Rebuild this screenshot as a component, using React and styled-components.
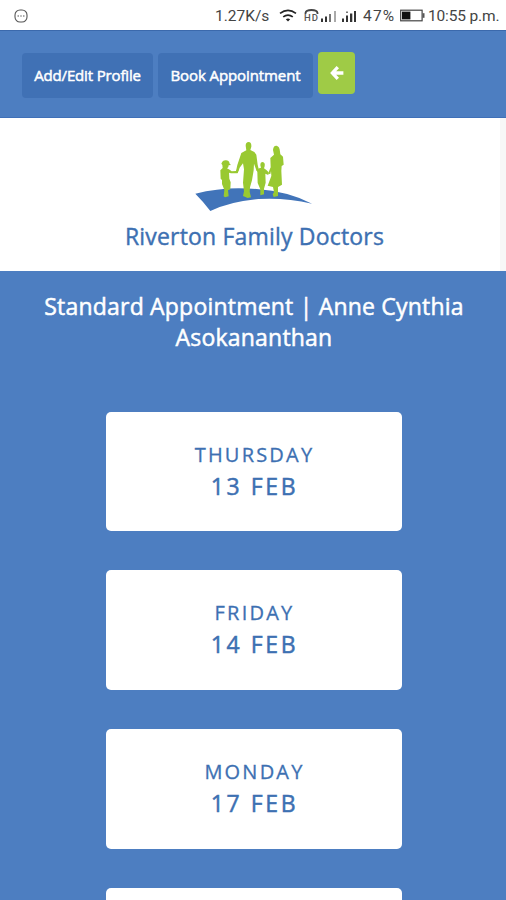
import React from 'react';
import styled, { createGlobalStyle } from 'styled-components';

const GlobalStyle = createGlobalStyle`
    * {
        box-sizing: border-box;
    }

    body {
        margin: 0;
        background-color: #4D7EC1;
        font-family: 'Open Sans', 'Noto Sans', sans-serif;
    }
`;

const Screen = styled.div`
    width: 100%;
    height: 900px;
    overflow: hidden;
    background-color: #4D7EC1;
`;

const StatusBar = styled.div`
    height: 30px;
    padding: 1px 7px 0 14px;
    display: flex;
    align-items: center;
    background-color: #fff;
    color: #444;
    font-family: Roboto, sans-serif;
    font-size: 15.5px;
    white-space: nowrap;
`;

const StatusText = styled.span`
    width: ${({ $width }) => $width}px;
    margin-left: ${({ $left }) => $left || 0}px;
    letter-spacing: ${({ $spacing }) => $spacing || 0}px;
`;

const StatusIcon = styled.svg`
    display: block;
    flex: none;
    margin-left: ${({ $left }) => $left || 0}px;
`;

const NavBar = styled.nav`
    height: 88px;
    padding: 22px 22px 0;
    display: flex;
    align-items: flex-start;
    gap: 5px;
    border-top: 1px solid #3B69AC;
    border-bottom: 1px solid #3F70B8;
`;

const NavButton = styled.button`
    width: ${({ $width }) => $width}px;
    height: 45px;
    padding: 0 0 2px;
    border: 0;
    border-radius: 4px;
    background-color: #4071B5;
    color: #fff;
    font-family: inherit;
    font-size: 15px;
    letter-spacing: ${({ $spacing }) => $spacing}px;
    white-space: nowrap;
    -webkit-text-stroke: 0.5px #fff;
`;

const BackButton = styled.button`
    width: 37px;
    height: 42px;
    margin-top: -1px;
    padding: 0;
    display: flex;
    align-items: center;
    justify-content: center;
    border: 0;
    border-radius: 4px;
    background-color: #9FCB46;
`;

const Brand = styled.header`
    height: 153px;
    padding: 12px 0 0 9px;
    display: flex;
    flex-direction: column;
    align-items: center;
    border-right: 6px solid #F7F7F7;
    background-color: #fff;
`;

const BrandName = styled.h1`
    margin: 0;
    color: #3D70B2;
    font-size: 23px;
    font-weight: 400;
    line-height: 32px;
    letter-spacing: 0.18px;
    white-space: nowrap;
    -webkit-text-stroke: 0.4px #3D70B2;
`;

const Title = styled.h2`
    margin: 0;
    padding: 20px 29px 0 31px;
    color: #fff;
    font-size: 23px;
    font-weight: 400;
    line-height: 31px;
    letter-spacing: 0.2px;
    text-align: center;
    -webkit-text-stroke: 0.5px #fff;
`;

const DayList = styled.div`
    padding: 58.6px 104px 0 106px;
    display: flex;
    flex-direction: column;
    gap: 39px;
`;

const DayCard = styled.div`
    height: 119.7px;
    flex: none;
    padding: 27px 0 0 1px;
    border-radius: 5px;
    background-color: #fff;
    color: #3D70B2;
    text-align: center;
    -webkit-text-stroke: 0.3px #3D70B2;
`;

const DayName = styled.div`
    font-size: 20px;
    line-height: 31px;
    letter-spacing: 2.2px;
`;

const DayDate = styled.div`
    font-size: 23px;
    line-height: 32px;
    letter-spacing: 2.6px;
    -webkit-text-stroke: 0.5px #3D70B2;
`;

const days = [
  { name: 'THURSDAY', date: '13 FEB' },
  { name: 'FRIDAY', date: '14 FEB' },
  { name: 'MONDAY', date: '17 FEB' },
  { name: '', date: '' },
];

function MessageIcon() {
  return (
    <StatusIcon width="14" height="14" viewBox="0 0 14 14" fill="none" stroke="#555" strokeWidth="1.1">
      <rect x="1" y="1" width="12" height="12" rx="5" />
      <path d="M3.5 7H5M6.3 7H7.7M9 7H10.5" />
    </StatusIcon>
  );
}

function WifiIcon() {
  return (
    <StatusIcon width="18" height="14" viewBox="0 0 18 14" fill="none" stroke="#222" strokeWidth="1.7">
      <path d="M1 4.4Q9 -1.5 17 4.4M4.2 7.9Q9 4.2 13.8 7.9" />
      <path d="M6.8 10.2Q9 8.7 11.2 10.2L9 12.6Z" fill="#222" stroke="none" />
    </StatusIcon>
  );
}

function SignalIcons() {
  return (
    <StatusIcon $left={7} width="56" height="16" viewBox="0 0 56 16">
      <path d="M1.5 6V5Q2 2 7.5 2T13.5 5V6" fill="none" stroke="#444" strokeWidth="1.8" />
      <text x="0" y="13.4" fontFamily="Roboto, sans-serif" fontSize="9.5" fontWeight="500" fill="#555" textLength="14">HD</text>
      <path d="M17 10.5H19V14H17ZM21 8.5H23V14H21Z" fill="#333" />
      <path d="M25 6H27V14H25Z" fill="#777" />
      <path d="M30 3H32V14H30Z" fill="#aaa" />
      <path d="M38 10.5H40V14H38ZM42 7.5H44V14H42ZM46 5.5H48.3V14H46ZM50 3H52V14H50Z" fill="#333" />
      <path d="M42 3.5H44V5H42Z" fill="#777" />
    </StatusIcon>
  );
}

function BatteryIcon() {
  return (
    <StatusIcon width="25" height="14" viewBox="0 0 25 14">
      <rect x="0.7" y="1.2" width="21.4" height="10.6" fill="none" stroke="#444" strokeWidth="1.2" />
      <rect x="2" y="2.6" width="8.4" height="7.8" fill="#111" />
      <rect x="22.5" y="4.2" width="2" height="4.6" fill="#555" />
    </StatusIcon>
  );
}

function BackArrow() {
  return (
    <svg width="14" height="14" viewBox="0 0 14 14" fill="none" stroke="#fff" strokeWidth="3.3">
      <path d="M7.8 1.2L2.4 7L7.8 12.8M2.7 7H13.4" />
    </svg>
  );
}

function FamilyLogo() {
  return (
    <svg width="140" height="90" viewBox="0 0 420 270">
      <path d="M31 191Q120 168 215 177Q310 184 381 221Q300 202 220 207Q135 214 76 243Q56 216 31 191Z" fill="#4174B9" />
      <g fill="#99C931">
        {/* son with the hat */}
        <path d="M109 101Q113 90 123 91Q132 91 134 101L138 105L131 106Q131 113 126 115L134 119L140 124L153 123L157 116L161 121L156 130L138 130L132 128L133 146L137 157L136 178L129 181L131 199L120 202L116 199L118 180L111 162L111 150L107 146L106 121L113 114L112 105Z" />
        {/* father */}
        <path d="M182 47Q182 36 191 36Q200 37 199 50L196 60L208 66L214 74L218 104L222 121L215 123L207 101L206 121L201 151L195 172L194 185L198 202L188 204L174 198L177 184L174 158L177 118L174 100L164 113L158 130L152 128L157 105L165 81L169 69L184 61Z" />
        {/* daughter */}
        <path d="M226 106Q226 96 233 96Q241 97 239 109L237 115L244 120L251 127L250 135L241 131L242 158L237 176L237 193L226 196L226 178L218 159L217 126L214 119L223 115L228 113Z" />
        {/* mother */}
        <path d="M264 60Q265 46 275 47Q284 49 285 65L286 73L294 80L296 104L290 108L289 123L291 164L279 171L279 198L266 201L263 193L267 187L264 171L248 167L259 138L258 123L256 132L249 131L257 112L256 84L267 74Z" />
      </g>
    </svg>
  );
}

export default function App() {
  return (
    <Screen>
      <GlobalStyle />
      <StatusBar>
        <MessageIcon />
        <StatusText $left={187} $width={64}>1.27K/s</StatusText>
        <WifiIcon />
        <SignalIcons />
        <StatusText $left={3} $width={37} $spacing={1.2}>47%</StatusText>
        <BatteryIcon />
        <StatusText $left={3} $width={71} $spacing={-0.15}>10:55 p.m.</StatusText>
      </StatusBar>
      <NavBar>
        <NavButton $width={131} $spacing={-0.15}>Add/Edit Profile</NavButton>
        <NavButton $width={155} $spacing={-0.1}>Book Appointment</NavButton>
        <BackButton aria-label="Back">
          <BackArrow />
        </BackButton>
      </NavBar>
      <Brand>
        <FamilyLogo />
        <BrandName>Riverton Family Doctors</BrandName>
      </Brand>
      <Title>Standard Appointment | Anne Cynthia Asokananthan</Title>
      <DayList>
        {days.map((day, index) => (
          <DayCard key={index}>
            <DayName>{day.name}</DayName>
            <DayDate>{day.date}</DayDate>
          </DayCard>
        ))}
      </DayList>
    </Screen>
  );
}
